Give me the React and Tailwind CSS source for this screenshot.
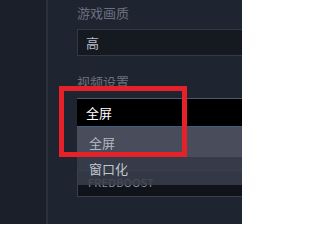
export default function App() {
  const font = { fontFamily: '"Noto Sans CJK SC", "Noto Sans", sans-serif' };
  return (
    <div
      className="relative flex w-[242px] h-[224px] overflow-hidden bg-[#1f2431]"
      style={font}
    >
      <aside className="w-[48px] shrink-0 bg-[#1b1f29] border-r-2 border-[#2a303d]" />

      <main className="flex-1 pl-[29px] pt-[4px] min-w-0">
        <div className="h-[18px] leading-[18px] text-[13px] text-[#6b717e] whitespace-nowrap">游戏画质</div>
        <div className="mt-[7px] h-[27px] w-[200px] border border-[#323846] bg-[#151920] pl-[8px] flex items-center text-[13px] text-[#b9bdc6]">
          高
        </div>

        <div className="mt-[17px] h-[18px] leading-[18px] text-[13px] text-[#6b717e] whitespace-nowrap">视频设置</div>
        <div className="mt-[7px] h-[29px] w-[200px] bg-black border-t border-t-[#525869] border-b border-b-[#3e5d7c] pl-[9px] flex items-center text-[13px] text-white">
          全屏
        </div>

        <div className="relative pt-[43px]">
          <div className="h-[27px] w-[200px] border border-[#3a3f4c] bg-[#10131a] pl-[10px] pb-[2px] flex items-center text-[11px] text-[#8a909c] tracking-wide">
            FREDBOOST
          </div>
          <ul className="absolute left-0 top-0 w-[200px] text-[13px]">
            <li className="h-[30px] bg-[#484c5b] pl-[12px] pt-[2px] flex items-center text-[#b3b7c1]">全屏</li>
            <li className="h-[28px] bg-[#3b3f4d]/85 pl-[12px] pb-[4px] flex items-center text-[#c3c7cf]">窗口化</li>
          </ul>
        </div>

        <div className="mt-[25px] flex items-center gap-[32px]">
          <div className="ml-[1px] h-[14px] w-[18px] border border-[#3b4150] bg-[#161a22]" />
          <div className="text-[12px] text-[#4a505d] whitespace-nowrap">开启垂直同步</div>
        </div>
      </main>

      <div className="absolute left-[59px] top-[86px] w-[128px] h-[71px] border-[5px] border-[#e5222a]" />
    </div>
  );
}
